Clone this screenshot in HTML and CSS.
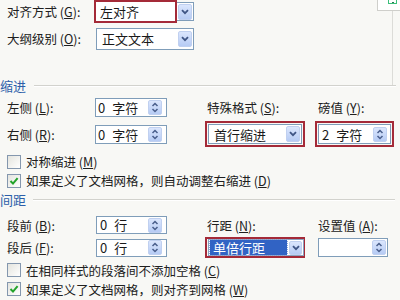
FILE: index.html
```html
<!DOCTYPE html>
<html lang="zh-CN">
<head>
<meta charset="utf-8">
<title>段落</title>
<link rel="stylesheet" href="styles.css">
</head>
<body>
<div class="dlg">
  <div class="corner"><span class="corner-mark"></span></div>

  <div class="upper">
    <div class="row r1">
      <div class="lab">对齐方式 (<u>G</u>):</div>
      <div class="combo c-align">
        <div class="hl val">左对齐</div>
        <div class="btn dd"><svg width="8" height="6" viewBox="0 0 8 6"><path d="M1 1.2 L4 4.2 L7 1.2" fill="none" stroke="#3f5585" stroke-width="1.8"/></svg></div>
      </div>
    </div>
    <div class="row r2">
      <div class="lab">大纲级别 (<u>O</u>):</div>
      <div class="combo c-outline">
        <div class="val">正文文本</div>
        <div class="btn dd"><svg width="8" height="6" viewBox="0 0 8 6"><path d="M1 1.2 L4 4.2 L7 1.2" fill="none" stroke="#3f5585" stroke-width="1.8"/></svg></div>
      </div>
    </div>
  </div>

  <div class="sec s-indent"><span class="sec-title">缩进</span><span class="sec-line"></span></div>

  <div class="row rA">
    <div class="lab">左侧 (<u>L</u>):</div>
    <div class="c2">
      <div class="spin"><span class="val">0 字符</span><span class="btn sp"><svg width="8" height="11" viewBox="0 0 8 11"><path d="M1.5 4 L4 1.5 L6.5 4 M1.5 7 L4 9.5 L6.5 7" fill="none" stroke="#4a5f8c" stroke-width="1.5"/></svg></span></div>
    </div>
    <div class="c3 rlab">特殊格式 (<u>S</u>):</div>
    <div class="c4 rlab">磅值 (<u>Y</u>):</div>
  </div>

  <div class="row rB">
    <div class="lab">右侧 (<u>R</u>):</div>
    <div class="c2">
      <div class="spin"><span class="val">0 字符</span><span class="btn sp"><svg width="8" height="11" viewBox="0 0 8 11"><path d="M1.5 4 L4 1.5 L6.5 4 M1.5 7 L4 9.5 L6.5 7" fill="none" stroke="#4a5f8c" stroke-width="1.5"/></svg></span></div>
    </div>
    <div class="c3">
      <div class="redbox rb-special">
        <div class="combo c-special">
          <div class="val">首行缩进</div>
          <div class="btn dd"><svg width="8" height="6" viewBox="0 0 8 6"><path d="M1 1.2 L4 4.2 L7 1.2" fill="none" stroke="#3f5585" stroke-width="1.8"/></svg></div>
        </div>
      </div>
    </div>
    <div class="c4">
      <div class="redbox rb-value">
        <div class="spin s-value"><span class="val">2 字符</span><span class="btn sp"><svg width="8" height="11" viewBox="0 0 8 11"><path d="M1.5 4 L4 1.5 L6.5 4 M1.5 7 L4 9.5 L6.5 7" fill="none" stroke="#4a5f8c" stroke-width="1.5"/></svg></span></div>
      </div>
    </div>
  </div>

  <div class="cbrow cb1">
    <span class="box"></span>
    <span class="cbtext">对称缩进 (<u>M</u>)</span>
  </div>
  <div class="cbrow cb2">
    <span class="box"><svg width="12" height="12" viewBox="0 0 12 12"><path d="M2.5 6 L5 8.6 L9.6 3.2" fill="none" stroke="#23a32a" stroke-width="2"/></svg></span>
    <span class="cbtext">如果定义了文档网格，则自动调整右缩进 (<u>D</u>)</span>
  </div>

  <div class="sec s-spacing"><span class="sec-title">间距</span><span class="sec-line"></span></div>

  <div class="row rC">
    <div class="lab">段前 (<u>B</u>):</div>
    <div class="c2">
      <div class="spin s-line"><span class="val">0 行</span><span class="btn sp"><svg width="8" height="11" viewBox="0 0 8 11"><path d="M1.5 4 L4 1.5 L6.5 4 M1.5 7 L4 9.5 L6.5 7" fill="none" stroke="#4a5f8c" stroke-width="1.5"/></svg></span></div>
    </div>
    <div class="c3 rlab">行距 (<u>N</u>):</div>
    <div class="c4 rlab">设置值 (<u>A</u>):</div>
  </div>

  <div class="row rD">
    <div class="lab">段后 (<u>F</u>):</div>
    <div class="c2">
      <div class="spin s-line"><span class="val">0 行</span><span class="btn sp"><svg width="8" height="11" viewBox="0 0 8 11"><path d="M1.5 4 L4 1.5 L6.5 4 M1.5 7 L4 9.5 L6.5 7" fill="none" stroke="#4a5f8c" stroke-width="1.5"/></svg></span></div>
    </div>
    <div class="c3">
      <div class="redbox rb-linesp">
        <div class="combo c-linesp">
          <div class="val sel"><span class="seltext">单倍行距</span></div>
          <div class="btn dd"><svg width="8" height="6" viewBox="0 0 8 6"><path d="M1 1.2 L4 4.2 L7 1.2" fill="none" stroke="#3f5585" stroke-width="1.8"/></svg></div>
        </div>
      </div>
    </div>
    <div class="c4">
      <div class="spin s-set"><span class="val"></span><span class="btn sp"><svg width="8" height="11" viewBox="0 0 8 11"><path d="M1.5 4 L4 1.5 L6.5 4 M1.5 7 L4 9.5 L6.5 7" fill="none" stroke="#4a5f8c" stroke-width="1.5"/></svg></span></div>
    </div>
  </div>

  <div class="cbrow cb3">
    <span class="box"></span>
    <span class="cbtext">在相同样式的段落间不添加空格 (<u>C</u>)</span>
  </div>
  <div class="cbrow cb4">
    <span class="box"><svg width="12" height="12" viewBox="0 0 12 12"><path d="M2.5 6 L5 8.6 L9.6 3.2" fill="none" stroke="#23a32a" stroke-width="2"/></svg></span>
    <span class="cbtext">如果定义了文档网格，则对齐到网格 (<u>W</u>)</span>
  </div>
</div>
</body>
</html>
```

FILE: styles.css
```css
* { box-sizing: border-box; margin: 0; padding: 0; }
html, body { width: 400px; height: 300px; overflow: hidden; }
body {
  background: #f8f8f5;
  font-family: "Noto Sans CJK SC", "Noto Sans", sans-serif;
  font-size: 12.5px;
  color: #202020;
}
u { text-decoration: underline; text-underline-offset: 1px; }

.dlg { position: relative; width: 400px; height: 300px; overflow: hidden; }

/* top-right fragment of another window, lying over the frame */
.corner {
  position: absolute; right: 0; top: 0;
  width: 23px; height: 11px;
  background: #fff;
  border-left: 1px solid #cfcfcb;
  border-bottom: 1px solid #cfcfcb;
}
.corner-mark {
  position: absolute; left: 10px; top: -2px;
  width: 9px; height: 6px;
  border: 1px solid #3cbf7a;
}
.corner-mark::after {
  content: ""; position: absolute; left: 3px; bottom: 0;
  width: 2px; height: 1px; background: #2a7a50;
}

.upper {
  width: 393px;
  height: 86px;
  border-right: 1px solid #dcdcd8;
}

.row { display: flex; align-items: center; white-space: nowrap; }
.lab { width: 95px; padding-left: 7px; flex: none; }
.c2 { width: 110px; flex: none; display: flex; }
.c3 { width: 110px; flex: none; display: flex; }
.c4 { flex: 1; display: flex; }
.rlab { padding-left: 2px; }
.c4.rlab { padding-left: 3px; }

.val { flex: 1; padding-left: 4px; font-size: 13px; line-height: 17px; color: #1a1a1a; word-spacing: 4px; }

.combo {
  display: flex; align-items: center;
  background: #fff;
  border: 1px solid #7f9db9;
}
.spin {
  display: flex; align-items: center;
  background: #fff;
  border: 1px solid #7f9db9;
  width: 72px; height: 19px;
}
.spin .val { padding-left: 2px; }

.btn {
  flex: none;
  display: flex; align-items: center; justify-content: center;
  background: linear-gradient(#dbe6fd, #b6cbf4);
  border: 1px solid #c0d0f0;
  border-radius: 2px;
}
.btn.dd { width: 14px; height: 16px; margin: 0 1px; }
.btn.sp { width: 14px; height: 15px; margin-right: 4px; }

/* row 1 */
.r1 { height: 22px; }
.c-align { width: 99px; height: 19px; margin-top: 1px; }
.hl {
  flex: none;
  width: 83px; height: 23px;
  margin: -2px 0 -2px -2px;
  border: 2px solid #a42a38;
  padding-left: 4px;
  line-height: 19px;
  background: #fff;
}
/* row 2 */
.r2 { height: 23px; margin-top: 5px; }
.c-outline { width: 98px; height: 22px; margin-left: 1px; }
.c-outline .val { padding-left: 5px; }

/* section headings */
.sec { display: flex; align-items: center; height: 16px; }
.sec-title { color: #2c5ea9; font-size: 13px; line-height: 16px; }
.sec-line {
  width: 362px; margin-left: 8px;
  border-top: 1px solid #d2d2cd;
  border-bottom: 1px solid #ffffff;
}
.s-indent { margin-top: -8px; }
.s-indent .sec-title { margin-left: 0; }
.s-spacing { margin-top: 4px; }
.s-spacing .sec-title { margin-left: 0; }
.s-spacing .sec-line { margin-left: 7px; }

/* indent rows */
.rA { height: 19px; margin-top: 4px; }
.rB { height: 26px; margin-top: 4px; }

.redbox {
  border: 2px solid #a42a38;
  padding: 1px;
  flex: none;
}
.rb-special { width: 100px; height: 26px; }
.c-special { width: 94px; height: 20px; }
.c-special .val { padding-left: 5px; }
.rb-value { width: 79px; height: 26px; }
.s-value { width: 73px; height: 20px; }
.s-value .val { padding-left: 3px; }
.s-value .btn.sp { margin-right: 3px; }

/* checkboxes */
.cbrow { display: flex; align-items: center; height: 15px; white-space: nowrap; }
.box {
  flex: none;
  width: 14px; height: 14px;
  margin-left: 7px; margin-right: 5px;
  border: 1px solid #8497ae;
  background: linear-gradient(135deg, #e4e4de, #ffffff);
  display: flex; align-items: center; justify-content: center;
}
.cbtext { font-size: 12.5px; }
.cb1 { margin-top: 7px; }
.cb2 { margin-top: 4px; }

/* spacing rows */
.rC { height: 18px; margin-top: 8px; }
.rD { height: 21px; margin-top: 3px; }
.s-line { height: 18px; margin-left: 1px; width: 71px; }
.s-line .val { padding-left: 3px; line-height: 16px; }

.rb-linesp { width: 100px; height: 21px; padding: 0 1px; }
.c-linesp { width: 96px; height: 17px; border-color: #8aa3c0; }
.c-linesp .btn.dd { height: 14px; width: 13px; }
.sel { padding: 0 1px; height: 15px; display: flex; }
.seltext {
  flex: 1;
  background: #3163c4;
  color: #fff;
  font-size: 13px;
  line-height: 15px;
  padding-left: 3px;
  outline: 1px dotted #8fa8dc;
}
.s-set { width: 70px; height: 19px; margin-left: 3px; }
.s-set .btn.sp { margin-right: 1px; }

.cb3 { margin-top: 5px; height: 14px; }
.cb4 { margin-top: 5px; height: 14px; }
```
